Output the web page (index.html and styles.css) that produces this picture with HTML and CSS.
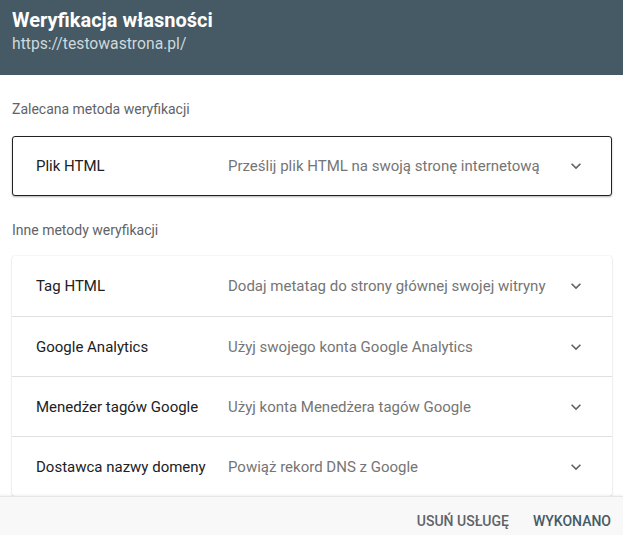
FILE: index.html
```html
<!DOCTYPE html>
<html lang="pl">
<head>
<meta charset="utf-8">
<title>Weryfikacja własności</title>
<link rel="stylesheet" href="styles.css">
</head>
<body>
<div class="dialog">
  <header class="head">
    <div class="title">Weryfikacja własności</div>
    <div class="url">https://testowastrona.pl/</div>
  </header>
  <main class="content">
    <div class="section-label first">Zalecana metoda weryfikacji</div>
    <div class="card selected">
      <div class="row">
        <span class="name">Plik HTML</span>
        <span class="desc">Prześlij plik HTML na swoją stronę internetową</span>
        <svg class="chev" viewBox="0 0 24 24" width="20" height="20"><path d="M7.41 8.59 12 13.17l4.59-4.58L18 10l-6 6-6-6z"/></svg>
      </div>
    </div>
    <div class="section-label second">Inne metody weryfikacji</div>
    <div class="card list">
      <div class="row">
        <span class="name">Tag HTML</span>
        <span class="desc">Dodaj metatag do strony głównej swojej witryny</span>
        <svg class="chev" viewBox="0 0 24 24" width="20" height="20"><path d="M7.41 8.59 12 13.17l4.59-4.58L18 10l-6 6-6-6z"/></svg>
      </div>
      <div class="row">
        <span class="name">Google Analytics</span>
        <span class="desc">Użyj swojego konta Google Analytics</span>
        <svg class="chev" viewBox="0 0 24 24" width="20" height="20"><path d="M7.41 8.59 12 13.17l4.59-4.58L18 10l-6 6-6-6z"/></svg>
      </div>
      <div class="row">
        <span class="name">Menedżer tagów Google</span>
        <span class="desc">Użyj konta Menedżera tagów Google</span>
        <svg class="chev" viewBox="0 0 24 24" width="20" height="20"><path d="M7.41 8.59 12 13.17l4.59-4.58L18 10l-6 6-6-6z"/></svg>
      </div>
      <div class="row">
        <span class="name">Dostawca nazwy domeny</span>
        <span class="desc">Powiąż rekord DNS z Google</span>
        <svg class="chev" viewBox="0 0 24 24" width="20" height="20"><path d="M7.41 8.59 12 13.17l4.59-4.58L18 10l-6 6-6-6z"/></svg>
      </div>
    </div>
  </main>
  <footer class="foot">
    <button class="btn">USUŃ USŁUGĘ</button>
    <button class="btn primary">WYKONANO</button>
  </footer>
</div>
</body>
</html>
```
FILE: styles.css
```css
* { box-sizing: border-box; }
html, body { margin: 0; padding: 0; }
body {
  font-family: Roboto, "Liberation Sans", Arial, sans-serif;
  background: #fff;
  color: #202124;
}
.dialog {
  width: 623px;
  height: 535px;
  display: flex;
  flex-direction: column;
  overflow: hidden;
}
.head {
  flex: 0 0 75px;
  background: #455a64;
  padding: 7px 12px 0;
}
.title {
  color: #fff;
  font-size: 20px;
  font-weight: 700;
  line-height: 26px;
}
.url {
  color: #cfd8dc;
  font-size: 15.7px;
  line-height: 22px;
}
.content {
  flex: 1 1 auto;
  overflow: hidden;
  padding: 0 11px 0 12px;
}
.section-label {
  font-size: 14px;
  color: #5f6368;
  line-height: 18px;
  padding: 25px 0 18px;
}
.section-label.second { padding-bottom: 17px; }
.card {
  background: #fff;
  border-radius: 3px;
}
.card.selected {
  border: 1px solid #202124;
  box-shadow: 0 1px 2px rgba(0,0,0,0.3);
}
.card.selected .row { height: 58px; padding-left: 23px; padding-right: 25px; }
.card.list {
  box-shadow: 0 0 2px rgba(0,0,0,0.12), 0 1px 2px rgba(0,0,0,0.12);
}
.row {
  height: 60px;
  display: flex;
  align-items: center;
  padding: 0 26px 0 24px;
  font-size: 15px;
}
.list .row + .row { border-top: 1px solid #e0e0e0; }
.name {
  width: 192px;
  flex: 0 0 192px;
  color: #202124;
  white-space: nowrap;
}
.desc {
  flex: 1 1 auto;
  color: #757575;
  white-space: nowrap;
}
.chev { fill: #5f6368; flex: 0 0 auto; }
.foot {
  flex: 0 0 39px;
  background: #f8f8f8;
  border-top: 1px solid #e6e6e6;
  box-shadow: 0 -1px 2px rgba(0,0,0,0.06);
  display: flex;
  justify-content: flex-end;
  align-items: center;
  gap: 24px;
  padding: 10px 12px 0 0;
  position: relative;
  z-index: 1;
}
.btn {
  border: 0;
  background: none;
  padding: 0;
  font-family: Roboto, "Liberation Sans", Arial, sans-serif;
  font-size: 14px;
  font-weight: 500;
  color: #5f6368;
  letter-spacing: 0;
}
.btn.primary { color: #455a64; }
```
